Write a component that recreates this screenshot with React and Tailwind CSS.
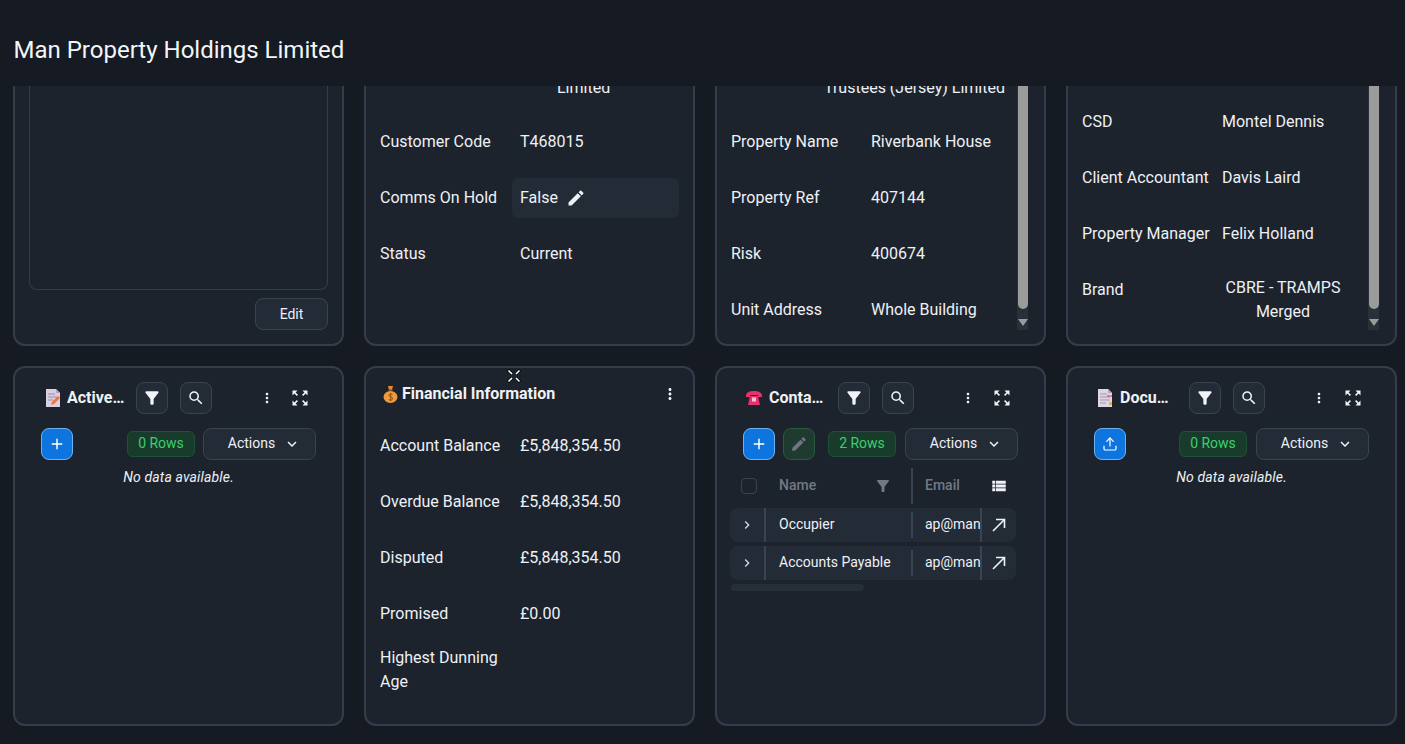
import React from "react";
import {
  MdFilterAlt,
  MdSearch,
  MdMoreVert,
  MdEdit,
  MdAdd,
  MdKeyboardArrowDown,
  MdKeyboardArrowRight,
  MdViewList,
  MdZoomOutMap,
} from "react-icons/md";
import { Upload } from "lucide-react";

const FONT = "font-['Roboto','Liberation_Sans',sans-serif]";

function MemoEmoji() {
  return (
    <svg width="16" height="18" viewBox="0 0 16 18" className="shrink-0">
      <path d="M1 0h10l4 4v14H1z" fill="#d9cfe0" />
      <path d="M11 0l4 4h-4z" fill="#b3a4bd" />
      <path d="M3 5h7M3 8h9M3 11h5" stroke="#9c8aa8" strokeWidth="1" />
      <path d="M6 16l1-3 6-6 2 2-6 6z" fill="#f0743a" />
    </svg>
  );
}

function PageEmoji() {
  return (
    <svg width="16" height="18" viewBox="0 0 16 18" className="shrink-0">
      <path d="M1 0h10l4 4v14H1z" fill="#ded6e4" />
      <path d="M11 0l4 4h-4z" fill="#b3a4bd" />
      <path d="M3 5h7M3 8h10M3 11h10M3 14h6" stroke="#a595b2" strokeWidth="1" />
      <path d="M10 7h5" stroke="#e2557a" strokeWidth="1.4" />
      <rect x="12" y="13" width="3" height="3" fill="#e6b13f" />
    </svg>
  );
}

function PhoneEmoji() {
  return (
    <svg width="16" height="14" viewBox="0 0 16 14" className="shrink-0">
      <path d="M0 5C0 1 4 0 8 0s8 1 8 5v1h-4V4H4v2H0z" fill="#e8316f" />
      <path d="M2 14l2-9h8l2 9z" fill="#e8316f" />
      <rect x="6" y="6.5" width="4" height="4" fill="#f3c3d3" />
    </svg>
  );
}

function BagEmoji() {
  return (
    <svg width="15" height="17" viewBox="0 0 15 17" className="shrink-0">
      <path d="M5 0h5L9 4H6z" fill="#e58a2e" />
      <rect x="5.5" y="3.5" width="4" height="1.5" fill="#8a4f1a" />
      <ellipse cx="7.5" cy="11" rx="7" ry="6" fill="#ef9a3c" />
      <path d="M9.5 8.5C8 7.5 6 8 6 9.5s3.5 1 3.5 3-2.5 2-3.7 1M7.7 7v8" stroke="#8a4f1a" strokeWidth="1" fill="none" />
    </svg>
  );
}

function ResizeCursor() {
  return (
    <svg width="14" height="14" viewBox="0 0 14 14" className="absolute left-[507px] top-[369px]">
      <path d="M1 1l4 4M13 1L9 5M1 13l4-4M13 13L9 9" stroke="#000" strokeWidth="3" />
      <path d="M1.5 1.5l3.5 3.5M12.5 1.5L9 5M1.5 12.5L5 9M12.5 12.5L9 9" stroke="#fff" strokeWidth="1.6" />
    </svg>
  );
}

function ArrowOut() {
  return (
    <svg width="14" height="14" viewBox="0 0 14 14" fill="none" stroke="currentColor" strokeWidth="1.6">
      <path d="M1 13L12.5 1.5M4 1.5h8.5V10" />
    </svg>
  );
}

function Row({ label, children }) {
  return (
    <div className="flex h-14 shrink-0 items-center">
      <div className="w-[140px] shrink-0">{label}</div>
      <div>{children}</div>
    </div>
  );
}

function Scrollbar() {
  return (
    <div className="mb-[14px] flex w-[11px] shrink-0 flex-col bg-[#2a3039]">
      <div className="mx-auto h-[223px] w-[10px] rounded-b-full bg-[#9b9b9b]" />
      <div className="mt-[10px] flex justify-center">
        <div className="h-0 w-0 border-x-[5px] border-t-[7px] border-x-transparent border-t-[#9b9b9b]" />
      </div>
    </div>
  );
}

function TopCard({ children, className = "" }) {
  return (
    <div className={`flex h-[260px] flex-col justify-end overflow-hidden rounded-b-xl border-2 border-t-0 border-[#353d4a] bg-[#1d232d] ${className}`}>
      {children}
    </div>
  );
}

function IconBtn({ children }) {
  return (
    <button className="flex h-8 w-8 shrink-0 items-center justify-center rounded-lg border border-[#3a4350] bg-[#232b37] text-[#f1f3f6]">
      {children}
    </button>
  );
}

function Title({ emoji, text, pad, col, dots, expand }) {
  return (
    <div className={`flex items-center ${pad}`}>
      <div className={`flex shrink-0 ${col}`}>{emoji}</div>
      <div className="w-[69px] shrink-0 text-base leading-6 font-bold whitespace-nowrap text-[#eef1f5]">{text}</div>
      <IconBtn><MdFilterAlt size={20} /></IconBtn>
      <div className="w-3 shrink-0" />
      <IconBtn><MdSearch size={18} /></IconBtn>
      <div className={`flex w-4 justify-center text-[#f1f3f6] ${dots}`}><MdMoreVert size={18} /></div>
      <div className={`flex w-4 justify-center text-[#f1f3f6] ${expand}`}><MdZoomOutMap size={20} className="shrink-0" /></div>
    </div>
  );
}

function Badge({ children }) {
  return (
    <div className="flex h-[26px] w-[68px] shrink-0 items-center justify-center rounded-md border border-[#1f5136] bg-[#193b2b] pb-0.5 text-sm text-[#3ccf70]">
      {children}
    </div>
  );
}

function ActionsBtn() {
  return (
    <button className="flex h-8 w-[113px] shrink-0 items-center justify-center gap-2 rounded-lg border border-[#3a4350] bg-[#232b37] pl-[10px] text-sm text-[#eef1f5]">
      <span className="-mt-0.5">Actions</span> <MdKeyboardArrowDown size={18} />
    </button>
  );
}

function BlueBtn({ children }) {
  return (
    <button className="flex h-8 w-8 shrink-0 items-center justify-center rounded-lg border border-[#6db0f0] bg-[#0f75de] text-white">
      {children}
    </button>
  );
}

function NoData() {
  return <div className="mt-[7px] text-center text-sm leading-5 tracking-[0.15px] text-[#eef1f5] italic">No data available.</div>;
}

function ContactRow({ name }) {
  return (
    <div className="flex h-[34px] items-center rounded-lg bg-[#232b37] text-sm">
      <div className="flex w-[34px] justify-center text-[#d5d9e0]"><MdKeyboardArrowRight size={16} /></div>
      <div className="h-full w-0.5 bg-[#3a4350]" />
      <div className="-mt-0.5 w-[145px] shrink-0 truncate pl-[13px]">{name}</div>
      <div className="h-[26px] w-0.5 bg-[#3a4350]" />
      <div className="-mt-0.5 w-[67px] shrink-0 overflow-hidden pl-3 whitespace-nowrap">ap@manproperty</div>
      <div className="h-full w-0.5 bg-[#3a4350]" />
      <div className="flex flex-1 justify-center text-[#eef1f5]"><ArrowOut /></div>
    </div>
  );
}

export default function App() {
  return (
    <div className={`relative h-[744px] w-[1405px] overflow-hidden bg-[#161a22] text-base text-[#eef1f5] ${FONT}`}>
      <header className="flex h-[86px] items-end bg-[#161a22] pb-[20px] pl-[13.5px] text-2xl leading-8 text-[#f3f5f8]">
        Man Property Holdings Limited
      </header>

      <div className="grid grid-cols-[repeat(4,331px)] gap-5 pl-[13px]">
        <TopCard className="px-[14px] pb-[14px]">
          <div className="h-[240px] shrink-0 rounded-b-lg border border-t-0 border-[#353d4a]" />
          <div className="mt-2 flex justify-end">
            <button className="h-8 w-[73px] rounded-lg border border-[#3a4350] bg-[#232b37] text-sm">Edit</button>
          </div>
        </TopCard>

        <TopCard className="pb-[62px] pl-[14px]">
          <div className="h-14 shrink-0 pt-[18px] pl-[177px] leading-6">Limited</div>
          <Row label="Customer Code">T468015</Row>
          <div className="flex h-14 shrink-0 items-center">
            <div className="w-[132px] shrink-0">Comms On Hold</div>
            <div className="flex h-10 w-[167px] items-center gap-2 rounded-md bg-[#232b37] pl-2">
              False <MdEdit size={20} />
            </div>
          </div>
          <Row label="Status">Current</Row>
        </TopCard>

        <TopCard>
          <div className="flex h-[258px] overflow-hidden">
            <div className="flex min-w-0 flex-1 flex-col justify-end pb-[6px] pl-[14px]">
              <div className="flex h-14 shrink-0 justify-end pt-[18px] pr-3 leading-6 whitespace-nowrap">Trustees (Jersey) Limited</div>
              <Row label="Property Name">Riverbank House</Row>
              <Row label="Property Ref">407144</Row>
              <Row label="Risk">400674</Row>
              <Row label="Unit Address">Whole Building</Row>
            </div>
            <Scrollbar />
            <div className="w-4 shrink-0" />
          </div>
        </TopCard>

        <TopCard>
          <div className="flex h-[258px] overflow-hidden">
            <div className="flex min-w-0 flex-1 flex-col justify-end pb-[13px] pl-[14px]">
              <Row label="CSD">Montel Dennis</Row>
              <Row label="Client Accountant">Davis Laird</Row>
              <Row label="Property Manager">Felix Holland</Row>
              <div className="flex h-[69px] shrink-0">
                <div className="w-[140px] shrink-0 leading-[56px]">Brand</div>
                <div className="w-[122px] pt-[14px] text-center leading-6">CBRE - TRAMPS Merged</div>
              </div>
            </div>
            <Scrollbar />
            <div className="w-4 shrink-0" />
          </div>
        </TopCard>

        <div className="h-[360px] rounded-xl border-2 border-[#353d4a] bg-[#1d232d] pt-[14px]">
          <Title emoji={<MemoEmoji />} text="Active…" pad="pl-[30px]" col="w-[22px]" dots="ml-[47px]" expand="ml-[17px]" />
          <div className="mt-[14px] flex items-center px-[26px]">
            <BlueBtn><MdAdd size={18} /></BlueBtn>
            <div className="flex-1" />
            <Badge>0 Rows</Badge>
            <div className="w-2 shrink-0" />
            <ActionsBtn />
          </div>
          <NoData />
        </div>

        <div className="h-[360px] rounded-xl border-2 border-[#353d4a] bg-[#1d232d] pt-[14px] pl-[14px]">
          <div className="flex h-6 items-center pl-[3px]">
            <div className="flex w-[19px] shrink-0"><BagEmoji /></div>
            <div className="w-[259px] shrink-0 font-bold whitespace-nowrap">Financial Information</div>
            <MdMoreVert size={18} />
          </div>
          <div className="mt-3">
            <Row label="Account Balance">£5,848,354.50</Row>
            <Row label="Overdue Balance">£5,848,354.50</Row>
            <Row label="Disputed">£5,848,354.50</Row>
            <Row label="Promised">£0.00</Row>
            <div className="flex h-14 w-[130px] items-center leading-6">Highest Dunning Age</div>
          </div>
        </div>

        <div className="h-[360px] rounded-xl border-2 border-[#353d4a] bg-[#1d232d] pt-[14px]">
          <Title emoji={<PhoneEmoji />} text="Conta…" pad="pl-[29px]" col="w-[23px]" dots="ml-[46px]" expand="ml-[18px]" />
          <div className="mt-[14px] flex items-center pr-[26px] pl-[26px]">
            <BlueBtn><MdAdd size={18} /></BlueBtn>
            <button className="ml-2 flex h-8 w-8 shrink-0 items-center justify-center rounded-lg border border-[#28583f] bg-[#1f3b30] text-[#6f7680]"><MdEdit size={18} /></button>
            <div className="w-[13px] shrink-0" />
            <Badge>2 Rows</Badge>
            <div className="w-[9px] shrink-0" />
            <ActionsBtn />
          </div>
          <div className="mt-2 pr-[28px] pl-[13px]">
            <div className="flex h-9 items-center text-sm font-medium text-[#727984]">
              <div className="ml-[11px] h-4 w-4 shrink-0 rounded border border-[#3a4350]" />
              <div className="-mt-0.5 ml-[22px] w-[95px] shrink-0">Name</div>
              <MdFilterAlt size={18} className="shrink-0" />
              <div className="ml-[19px] h-full w-0.5 shrink-0 bg-[#3a4350]" />
              <div className="-mt-0.5 ml-3 w-[65px] shrink-0">Email</div>
              <MdViewList size={18} className="shrink-0 text-[#eef1f5]" />
            </div>
            <div className="mt-[4px] flex flex-col gap-1">
              <ContactRow name="Occupier" />
              <ContactRow name="Accounts Payable" />
            </div>
            <div className="mt-1 ml-px h-[7px] w-[133px] rounded-full bg-[#262e3a]" />
          </div>
        </div>

        <div className="h-[360px] rounded-xl border-2 border-[#353d4a] bg-[#1d232d] pt-[14px]">
          <Title emoji={<PageEmoji />} text="Docu…" pad="pl-[29px]" col="w-[23px]" dots="ml-[46px]" expand="ml-[18px]" />
          <div className="mt-[14px] flex items-center px-[26px]">
            <BlueBtn><Upload size={16} strokeWidth={1.8} /></BlueBtn>
            <div className="flex-1" />
            <Badge>0 Rows</Badge>
            <div className="w-[9px] shrink-0" />
            <ActionsBtn />
          </div>
          <NoData />
        </div>
      </div>

      <ResizeCursor />
    </div>
  );
}
